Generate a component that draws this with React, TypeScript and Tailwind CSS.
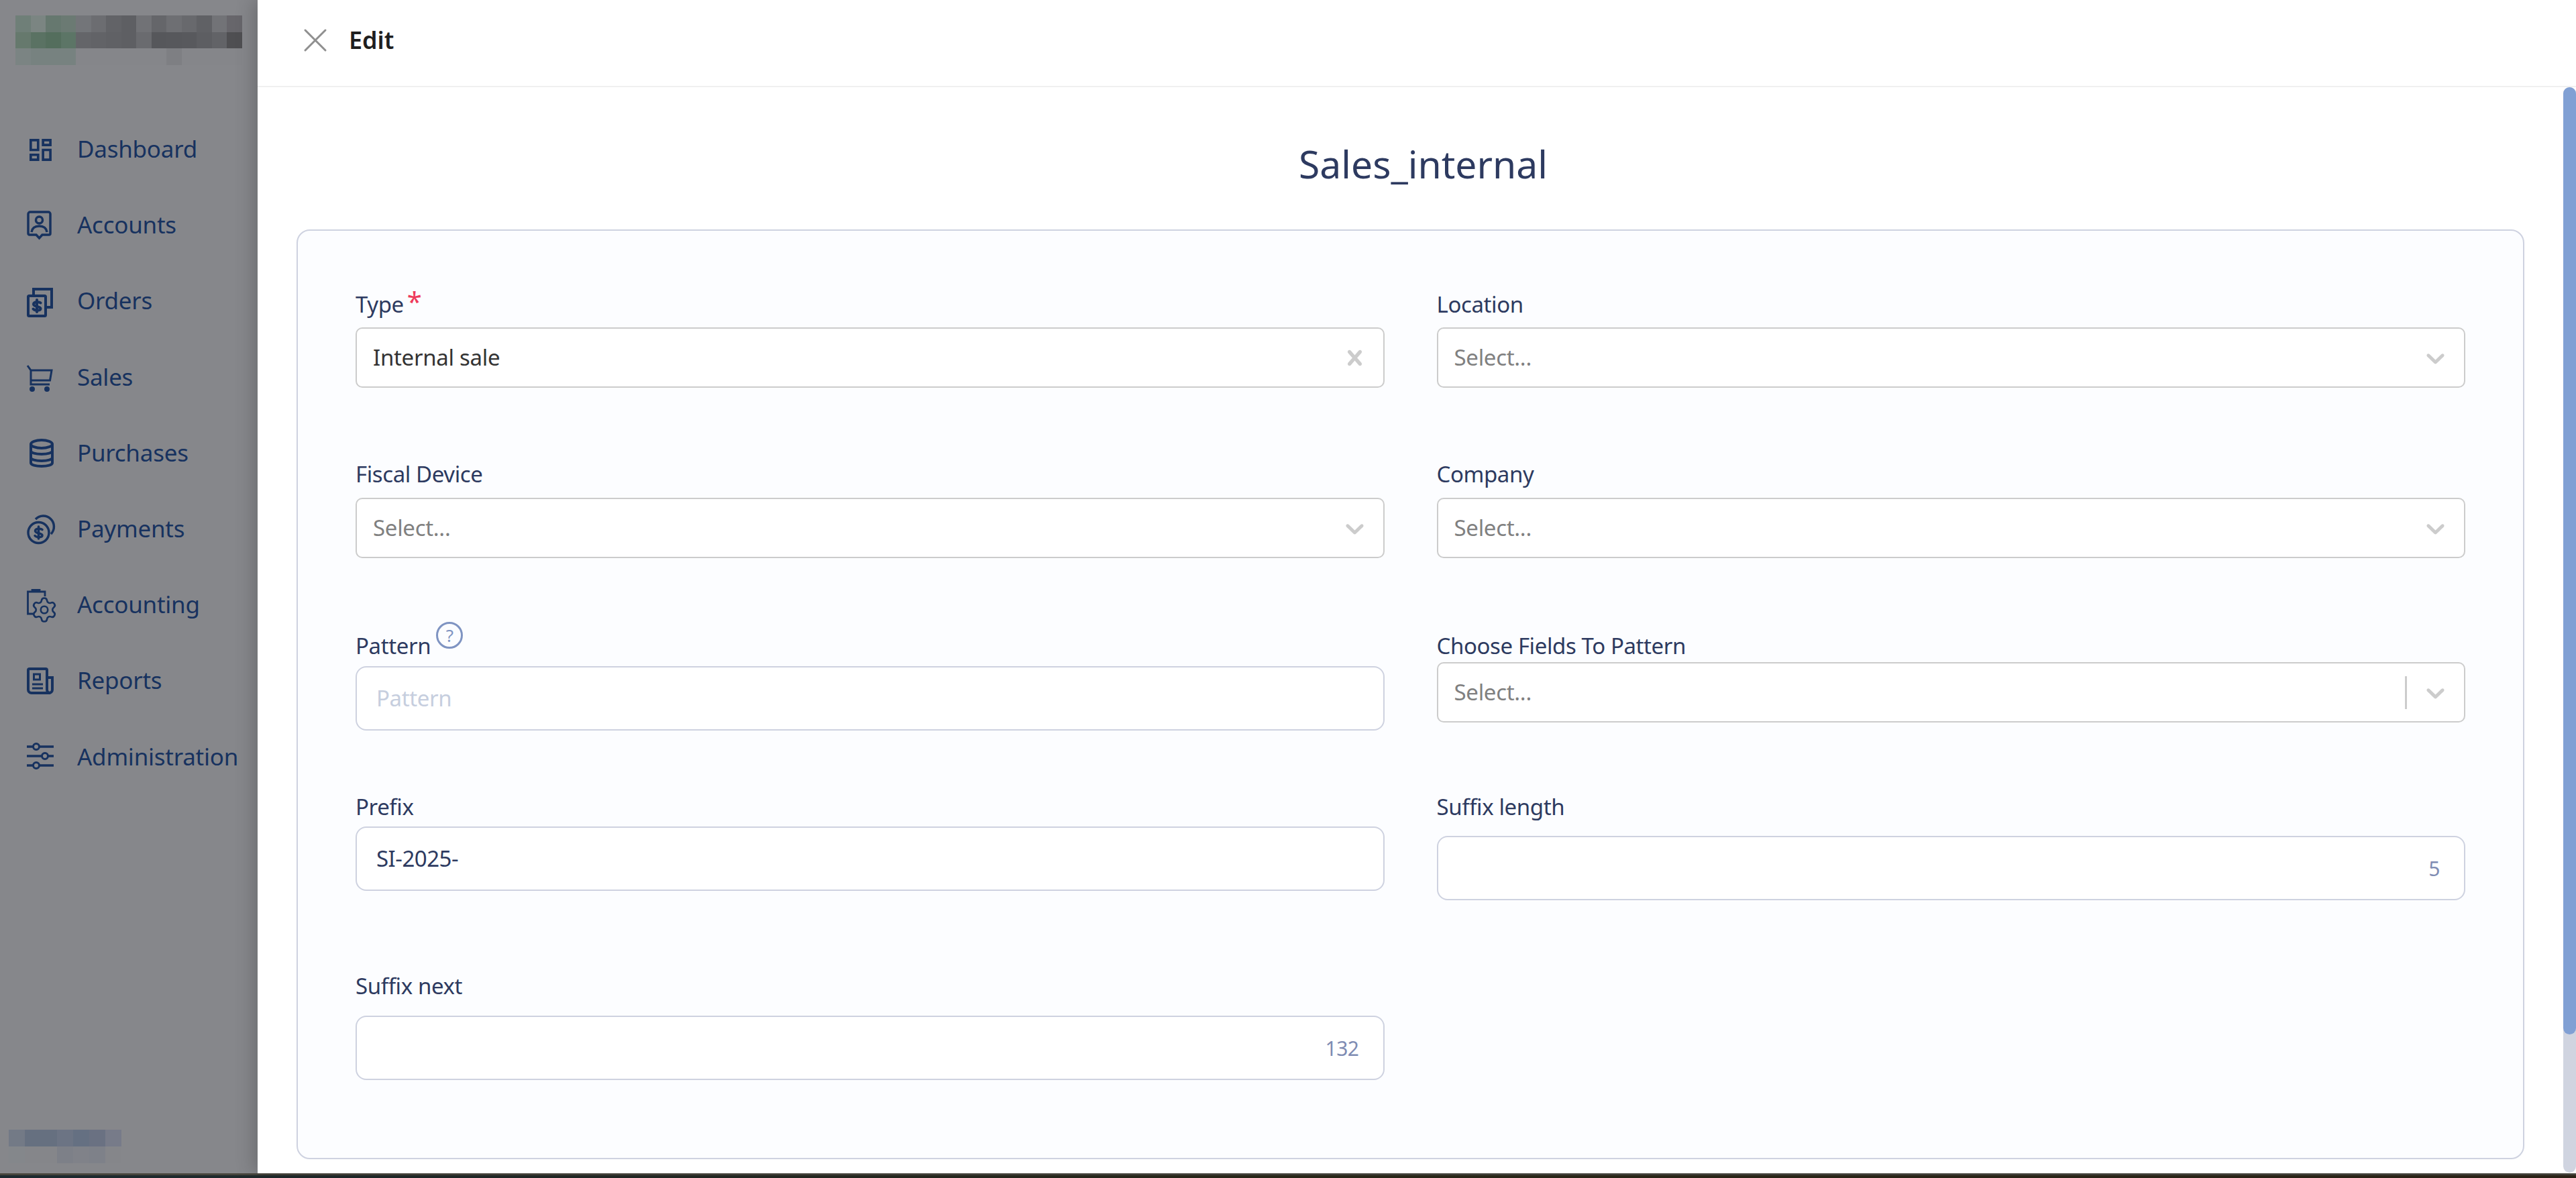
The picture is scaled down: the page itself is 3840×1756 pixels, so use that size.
import { Settings, X } from "lucide-react";
import type { ReactNode } from "react";

const chevronPath =
  "M4.516 7.548c0.436-0.446 1.043-0.481 1.576 0l3.908 3.747 3.908-3.747c0.533-0.481 1.141-0.446 1.576 0 0.436 0.445 0.408 1.197 0 1.615-0.406 0.418-4.695 4.502-4.695 4.502-0.217 0.223-0.502 0.335-0.789 0.335s-0.572-0.112-0.79-0.335c0 0-4.287-4.084-4.695-4.502s-0.436-1.17 0-1.615z";
const crossPath =
  "M14.348 14.849c-0.469 0.469-1.229 0.469-1.697 0l-2.651-3.030-2.651 3.029c-0.469 0.469-1.229 0.469-1.697 0-0.469-0.469-0.469-1.229 0-1.697l2.758-3.15-2.759-3.152c-0.469-0.469-0.469-1.228 0-1.697s1.228-0.469 1.697 0l2.652 3.031 2.651-3.031c0.469-0.469 1.228-0.469 1.697 0s0.469 1.229 0 1.697l-2.758 3.152 2.758 3.15c0.469 0.469 0.469 1.229 0 1.698z";

const logoRows = [
  ["#6f7f78", "#7b8582", "#66786f", "#6b7a73", "#737579", "#6c6d71", "#626367", "#5e5f63", "#717276", "#65666a", "#6e6f73", "#68696d", "#606165", "#727377", "#67666b"],
  ["#66796d", "#5a7263", "#546e5d", "#5c7566", "#646569", "#626367", "#606165", "#5e5f63", "#6a6b6f", "#56575b", "#57585c", "#58595d", "#5d5e62", "#626367", "#4f4f52"],
  ["#7b8483", "#778280", "#778280", "#778280", "#85868a", "#85868a", "#85868a", "#85868a", "#85868a", "#85868a", "#7e7f83", "#85868a", "#85868a", "#85868a", "#85868a"],
];
const footerRows = [
  ["#737a86", "#667080", "#667080", "#6c7484", "#657082", "#6a7182", "#777b89"],
  ["#84878b", "#85868a", "#85868a", "#7d8088", "#808289", "#7e8189", "#85868a"],
];

function Pixels({ rows, cw, ch }: { rows: string[][]; cw: number; ch: number }) {
  return (
    <svg width={rows[0].length * cw} height={rows.length * ch} shapeRendering="crispEdges">
      {rows.map((row, y) => row.map((c, x) => <rect key={x + "-" + y} x={x * cw} y={y * ch} width={cw} height={ch} fill={c} />))}
    </svg>
  );
}

function Dollar({ x, y }: { x: number; y: number }) {
  return (
    <g transform={`translate(${x} ${y})`} fill="none" strokeLinecap="round">
      <path d="M5.5-4.5C3.5-6.5-5-6.5-5-2.5S5.5.5 5.5 4 -3 7.5-5.5 4.5" />
      <path d="M0-9v18" />
    </g>
  );
}

const navIcons: Record<string, ReactNode> = {
  Dashboard: (
    <path
      transform="translate(-1.5 3.5) scale(1.83)"
      fill="currentColor"
      stroke="none"
      d="M19 5v2h-4V5h4M9 5v6H5V5h4m10 8v6h-4v-6h4M9 17v2H5v-2h4M21 3h-8v6h8V3zM11 3H3v10h8V3zm10 8h-8v10h8V11zm-10 4H3v6h8v-6z"
    />
  ),
  Accounts: (
    <g strokeWidth="3.5">
      <path d="M2 8a3 3 0 0 1 3-3h27a3 3 0 0 1 3 3v29a2 2 0 0 1-2 2H23l-4.500 5-4.500-5H4a2 2 0 0 1-2-2z" />
      <circle cx="18.500" cy="17" r="5" />
      <path d="M7 35c1-7 6-9 11.500-9s10.500 2 11.500 9" />
    </g>
  ),
  Orders: (
    <g strokeWidth="4">
      <rect x="2" y="17" width="26" height="30" rx="1.500" />
      <path d="M10 15V7h27v27h-9" />
      <Dollar x={15} y={32} />
    </g>
  ),
  Sales: (
    <g strokeWidth="3">
      <path d="M1 8l5 7h31l-2.500 15H6V36h28M6 15v15" />
      <circle cx="8" cy="43" r="2.500" fill="currentColor" />
      <circle cx="30" cy="43" r="2.500" fill="currentColor" />
    </g>
  ),
  Purchases: (
    <g strokeWidth="4">
      <ellipse cx="22" cy="12" rx="16" ry="6" />
      <path d="M6 12v28c0 3 7 5 16 5s16-2 16-5V12M6 22c0 3 7 5 16 5s16-2 16-5M6 32c0 3 7 5 16 5s16-2 16-5" />
    </g>
  ),
  Payments: (
    <g strokeWidth="3.500">
      <circle cx="17.500" cy="30" r="15.500" />
      <path d="M13 10A15.500 15.500 0 1 1 36 32" />
      <Dollar x={17.5} y={30} />
    </g>
  ),
  Accounting: (
    <g strokeWidth="2.800">
      <path d="M27 12V5H1.500v33H9M8 5V2.500h11V5" />
      <Settings x={5} y={11} width={42} height={42} strokeWidth={1.500} />
    </g>
  ),
  Reports: (
    <g strokeWidth="4">
      <path d="M2 9a2 2 0 0 1 2-2h24a2 2 0 0 1 2 2v29a5 5 0 0 0 5 5H7a5 5 0 0 1-5-5z" />
      <path d="M31 20h7v18a5 5 0 0 1-5 5" />
      <rect x="10.500" y="15" width="9" height="8" strokeWidth="3" />
      <path d="M8 30h16M8 36h16" strokeWidth="3" />
    </g>
  ),
  Administration: (
    <g strokeWidth="3.500">
      <path d="M0 10h40M0 24h40M0 38h40" />
      <circle cx="14" cy="10" r="4.500" fill="#86878b" strokeWidth="3" />
      <circle cx="27" cy="24" r="4.500" fill="#86878b" strokeWidth="3" />
      <circle cx="14" cy="38" r="4.500" fill="#86878b" strokeWidth="3" />
    </g>
  ),
};

const navItems = ["Dashboard", "Accounts", "Orders", "Sales", "Purchases", "Payments", "Accounting", "Reports", "Administration"];

function Sidebar() {
  return (
    <aside className="w-[384px] shrink-0 bg-[#86878b] flex flex-col text-[#17325f]">
      <div className="pl-[23px] pt-[23px] h-[165px] shrink-0">
        <Pixels rows={logoRows} cw={22.5} ch={24.6} />
      </div>
      <nav className="flex flex-col shrink-0">
        {navItems.map((name) => (
          <a key={name} className="h-[113.200px] flex items-center pl-[40px] gap-[31px] text-[35px] leading-none tracking-[-0.25px] whitespace-nowrap">
            <svg width="44" height="48" viewBox="0 0 44 48" fill="none" stroke="currentColor" className="shrink-0 overflow-visible">
              {navIcons[name]}
            </svg>
            {name}
          </a>
        ))}
      </nav>
      <div className="mt-[500px] pl-[13px]">
        <Pixels rows={footerRows} cw={24} ch={25} />
      </div>
    </aside>
  );
}

function Label({ children }: { children: ReactNode }) {
  return <label className="h-[36px] flex items-center text-[33px] leading-none tracking-[-0.4px] text-[#2d3a60] whitespace-nowrap">{children}</label>;
}

function SelectBox({ value, clearable, separator }: { value?: string; clearable?: boolean; separator?: boolean }) {
  return (
    <div className="h-[90px] bg-white border-2 border-[#cccccc] rounded-[10px] flex items-center pl-[24px] pr-[20px]">
      <span className={value ? "flex-1 text-[33px] tracking-[-0.3px] text-[#333333]" : "flex-1 text-[33px] tracking-[-0.3px] text-[#808080]"}>{value ?? "Select..."}</span>
      {separator && <span className="w-[3px] h-[49px] bg-[#cccccc] mr-[20px]" />}
      <svg width="45" height="45" viewBox="0 0 20 20" fill="#cccccc">
        <path d={clearable ? crossPath : chevronPath} />
      </svg>
    </div>
  );
}

function TextBox({ value, placeholder, right }: { value?: string; placeholder?: string; right?: boolean }) {
  return (
    <div className={right ? "h-[96px] bg-white border-2 border-[#ced2e0] rounded-[16px] flex items-center justify-end pr-[36px]" : "h-[96px] bg-white border-2 border-[#ced2e0] rounded-[16px] flex items-center pl-[29px]"}>
      {value && <span className={right ? "text-[30px] tracking-[-0.5px] text-[#7f8cb3]" : "text-[33px] tracking-[-0.5px] text-[#2d3a60]"}>{value}</span>}
      {placeholder && <span className="text-[33px] tracking-[-0.4px] text-[#c6cede]">{placeholder}</span>}
    </div>
  );
}

export default function App() {
  return (
    <div className="h-[1756px] w-[3840px] overflow-hidden flex flex-col font-['Noto_Sans',sans-serif]">
      <div className="h-[1749px] flex shrink-0">
        <Sidebar />
        <section className="relative flex-1 flex flex-col bg-white shadow-[-6px_0_26px_rgba(0,0,0,0.2)]">
          <header className="h-[130px] shrink-0 border-b-2 border-[#f0f0f0] flex items-center pl-[56px] pb-[8px] gap-[20px]">
            <X size={60} strokeWidth={1.200} className="text-[#8f8f8f]" />
            <span className="text-[36px] font-semibold text-[#1f1f1f]">Edit</span>
          </header>
          <div className="flex-1 flex min-h-0">
            <div className="flex-1 pl-[58px] pr-[58px]">
              <h1 className="h-[212px] pl-[38px] pt-[18px] flex items-center justify-center text-[57px] font-normal text-[#2d3a60]">Sales_internal</h1>
              <div className="h-[1386px] bg-[#fcfdff] border-2 border-[#ced2e0] rounded-[20px] px-[86px] pt-[91px] grid grid-cols-2 gap-x-[78px] grid-rows-[253px_256px_240px_267px_auto]">
                <div>
                  <Label>
                    Type
                    <span className="text-[#ee3b5b] text-[40px] ml-[5px] -mt-[8px]">*</span>
                  </Label>
                  <div className="mt-[17px]">
                    <SelectBox value="Internal sale" clearable />
                  </div>
                </div>
                <div>
                  <Label>Location</Label>
                  <div className="mt-[17px]">
                    <SelectBox />
                  </div>
                </div>
                <div>
                  <Label>Fiscal Device</Label>
                  <div className="mt-[18px]">
                    <SelectBox />
                  </div>
                </div>
                <div>
                  <Label>Company</Label>
                  <div className="mt-[18px]">
                    <SelectBox />
                  </div>
                </div>
                <div>
                  <Label>
                    Pattern
                    <span className="ml-[8px] -mt-[30px] w-[40px] h-[40px] rounded-full border-[3px] border-[#7f94c2] text-[#7f94c2] text-[26px] flex items-center justify-center">?</span>
                  </Label>
                  <div className="mt-[13px]">
                    <TextBox placeholder="Pattern" />
                  </div>
                </div>
                <div>
                  <Label>Choose Fields To Pattern</Label>
                  <div className="mt-[7px]">
                    <SelectBox separator />
                  </div>
                </div>
                <div>
                  <Label>Prefix</Label>
                  <div className="mt-[12px]">
                    <TextBox value="SI-2025-" />
                  </div>
                </div>
                <div>
                  <Label>Suffix length</Label>
                  <div className="mt-[26px]">
                    <TextBox value="5" right />
                  </div>
                </div>
                <div>
                  <Label>Suffix next</Label>
                  <div className="mt-[27px]">
                    <TextBox value="132" right />
                  </div>
                </div>
              </div>
            </div>
            <div className="w-[19px] shrink-0 mb-[1px] flex flex-col bg-[#d0d4e0] rounded-full">
              <div className="h-[1412px] bg-[#81a0d4] rounded-full" />
            </div>
          </div>
        </section>
      </div>
      <div className="flex-1 border-t-[3px] border-[#47453d] bg-gradient-to-r from-[#1c2a30] via-[#2c2a1a] to-[#2e2518]" />
    </div>
  );
}
